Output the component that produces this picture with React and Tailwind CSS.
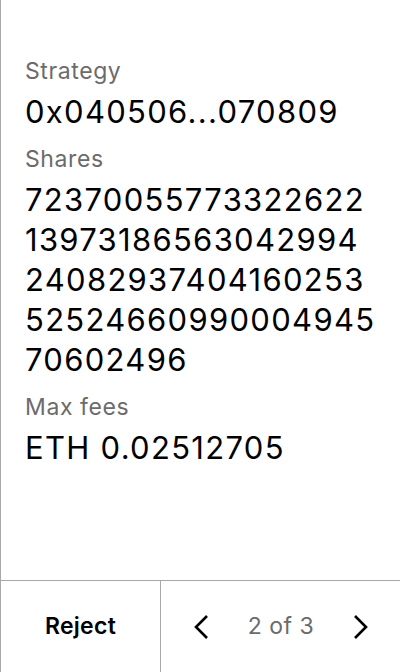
import React from 'react';

const items = [
  { label: 'Strategy', lines: ['0x040506...070809'] },
  {
    label: 'Shares',
    lines: ['72370055773322622', '13973186563042994', '24082937404160253', '52524660990004945', '70602496'],
  },
  { label: 'Max fees', lines: ['ETH 0.02512705'] },
];

const Chevron = ({ dir }) => (
  <svg width="16" height="26" viewBox="0 0 16 26" fill="none">
    <path
      d={dir === 'left' ? 'M14 2 L3 13 L14 24' : 'M2 2 L13 13 L2 24'}
      stroke="#000"
      strokeWidth="2.6"
    />
  </svg>
);

const App = () => {
  return (
    <div
      className="w-[400px] h-[672px] flex flex-col bg-white border-l border-[#a8a8a8]"
      style={{ fontFamily: 'Inter, sans-serif' }}
    >
      <div className="flex-1 px-6 pt-[57px] flex flex-col gap-[13px]">
        {items.map((item) => (
          <div key={item.label} className="flex flex-col gap-[7px]">
            <div className="text-[23px] leading-[28px] tracking-[0.6px] text-[#6b6b6b]">{item.label}</div>
            <div className="text-[31px] leading-[40px] tracking-[1.3px] text-black">
              {item.lines.map((line) => (
                <div key={line}>{line}</div>
              ))}
            </div>
          </div>
        ))}
      </div>
      <div className="h-[92px] flex border-t border-[#a8a8a8]">
        <button className="w-[159px] flex items-center justify-center text-[23px] tracking-[0.3px] font-semibold text-black">
          Reject
        </button>
        <div className="flex-1 flex items-center justify-between border-l border-[#a8a8a8] pl-[32px] pr-[31px]">
          <Chevron dir="left" />
          <span className="text-[23px] tracking-[0.5px] text-[#6b6b6b]">2 of 3</span>
          <Chevron dir="right" />
        </div>
      </div>
    </div>
  );
};

export default App;
